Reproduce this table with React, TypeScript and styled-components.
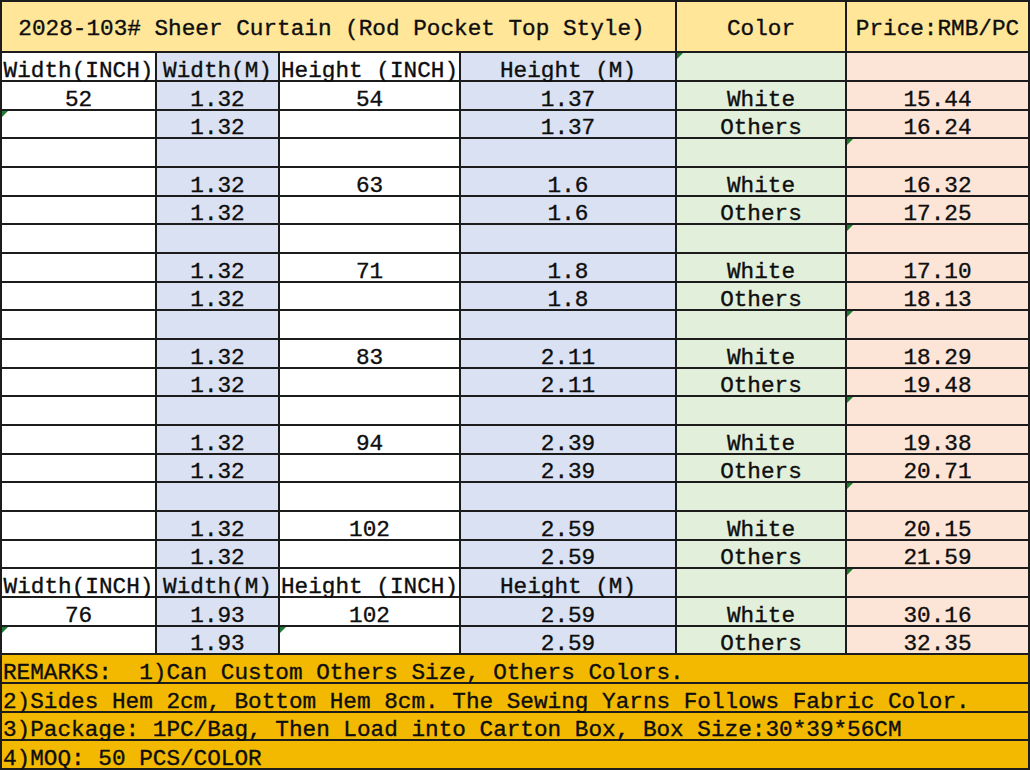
import React from "react";
import styled, { createGlobalStyle } from "styled-components";

const Global = createGlobalStyle`
  html, body { margin: 0; padding: 0; background: #ffffff; }
  body { font-family: "Liberation Mono", "DejaVu Sans Mono", monospace; color: #0e0e0e; }
`;

const COLORS = {
  white: "#ffffff",
  blue: "#d9e1f2",
  green: "#e2efda",
  peach: "#fce4d6",
  title: "#ffe699",
  remark: "#f2b900",
};

const colBg = ["white", "blue", "white", "blue", "green", "peach"] as const;

const Sheet = styled.div`
  width: 1030px;
  height: 770px;
  box-sizing: border-box;
  padding: 2px;
  display: grid;
  grid-template-columns: 153px 121px 179px 214px 168px 181px;
  grid-template-rows: 49px 27px repeat(24, 1fr);
  gap: 2px;
  background: #1c1c1c;
  font-size: 22.7px;
  -webkit-text-stroke: 0.35px #0e0e0e;
`;

type CellProps = {
  $bg: keyof typeof COLORS;
  $span?: number;
  $left?: boolean;
  $title?: boolean;
};

const Cell = styled.div<CellProps>`
  position: relative;
  background: ${(p) => COLORS[p.$bg]};
  grid-column: span ${(p) => p.$span ?? 1};
  display: flex;
  justify-content: ${(p) => (p.$left ? "flex-start" : "center")};
  align-items: ${(p) => (p.$title ? "center" : "flex-end")};
  padding: ${(p) => (p.$left ? "0 0 0 1px" : p.$title ? "4px 0 0 0" : "0")};
  line-height: ${(p) => (p.$title ? "22px" : "18px")};
  white-space: pre;
  overflow: visible;
  min-width: 0;
`;

const TitleCell = styled(Cell)`
  padding-right: 14px;
`;

const Marker = styled.span`
  position: absolute;
  left: 0;
  top: 0;
  width: 0;
  height: 0;
  border-top: 6px solid #1f7a34;
  border-right: 6px solid transparent;
  -webkit-text-stroke: 0;
`;

const groups = [
  { h: "54", hm: "1.37", w: "15.44", o: "16.24" },
  { h: "63", hm: "1.6", w: "16.32", o: "17.25" },
  { h: "71", hm: "1.8", w: "17.10", o: "18.13" },
  { h: "83", hm: "2.11", w: "18.29", o: "19.48" },
  { h: "94", hm: "2.39", w: "19.38", o: "20.71" },
  { h: "102", hm: "2.59", w: "20.15", o: "21.59" },
];

type Row = { cells: string[]; marks?: number[] };

const headerCells = ["Width(INCH)", "Width(M)", "Height (INCH)", "Height (M)", "", ""];

function buildRows(): Row[] {
  const rows: Row[] = [];
  groups.forEach((g, i) => {
    rows.push({ cells: [i === 0 ? "52" : "", "1.32", g.h, g.hm, "White", g.w] });
    rows.push({ cells: ["", "1.32", "", g.hm, "Others", g.o], marks: i === 0 ? [0] : [] });
    if (i < groups.length - 1) rows.push({ cells: ["", "", "", "", "", ""], marks: [5] });
  });
  rows.push({ cells: headerCells, marks: [5] });
  rows.push({ cells: ["76", "1.93", "102", "2.59", "White", "30.16"] });
  rows.push({ cells: ["", "1.93", "", "2.59", "Others", "32.35"], marks: [0, 2] });
  return rows;
}

const remarks = [
  "REMARKS:  1)Can Custom Others Size, Others Colors.",
  "2)Sides Hem 2cm, Bottom Hem 8cm. The Sewing Yarns Follows Fabric Color.",
  "3)Package: 1PC/Bag, Then Load into Carton Box, Box Size:30*39*56CM",
  "4)MOQ: 50 PCS/COLOR",
];

export default function App() {
  const rows = buildRows();
  return (
    <>
      <Global />
      <Sheet>
        <TitleCell $bg="title" $span={4} $title>
          2028-103# Sheer Curtain (Rod Pocket Top Style)
        </TitleCell>
        <Cell $bg="title" $title>Color</Cell>
        <Cell $bg="title" $title>Price:RMB/PC</Cell>

        {headerCells.map((t, c) => (
          <Cell key={`h${c}`} $bg={colBg[c]}>
            {c === 4 && <Marker />}
            {t}
          </Cell>
        ))}

        {rows.map((r, ri) =>
          r.cells.map((t, c) => (
            <Cell key={`r${ri}c${c}`} $bg={colBg[c]}>
              {r.marks?.includes(c) && <Marker />}
              {t}
            </Cell>
          ))
        )}

        {remarks.map((t, i) => (
          <Cell key={`m${i}`} $bg="remark" $span={6} $left>
            {t}
          </Cell>
        ))}
      </Sheet>
    </>
  );
}
